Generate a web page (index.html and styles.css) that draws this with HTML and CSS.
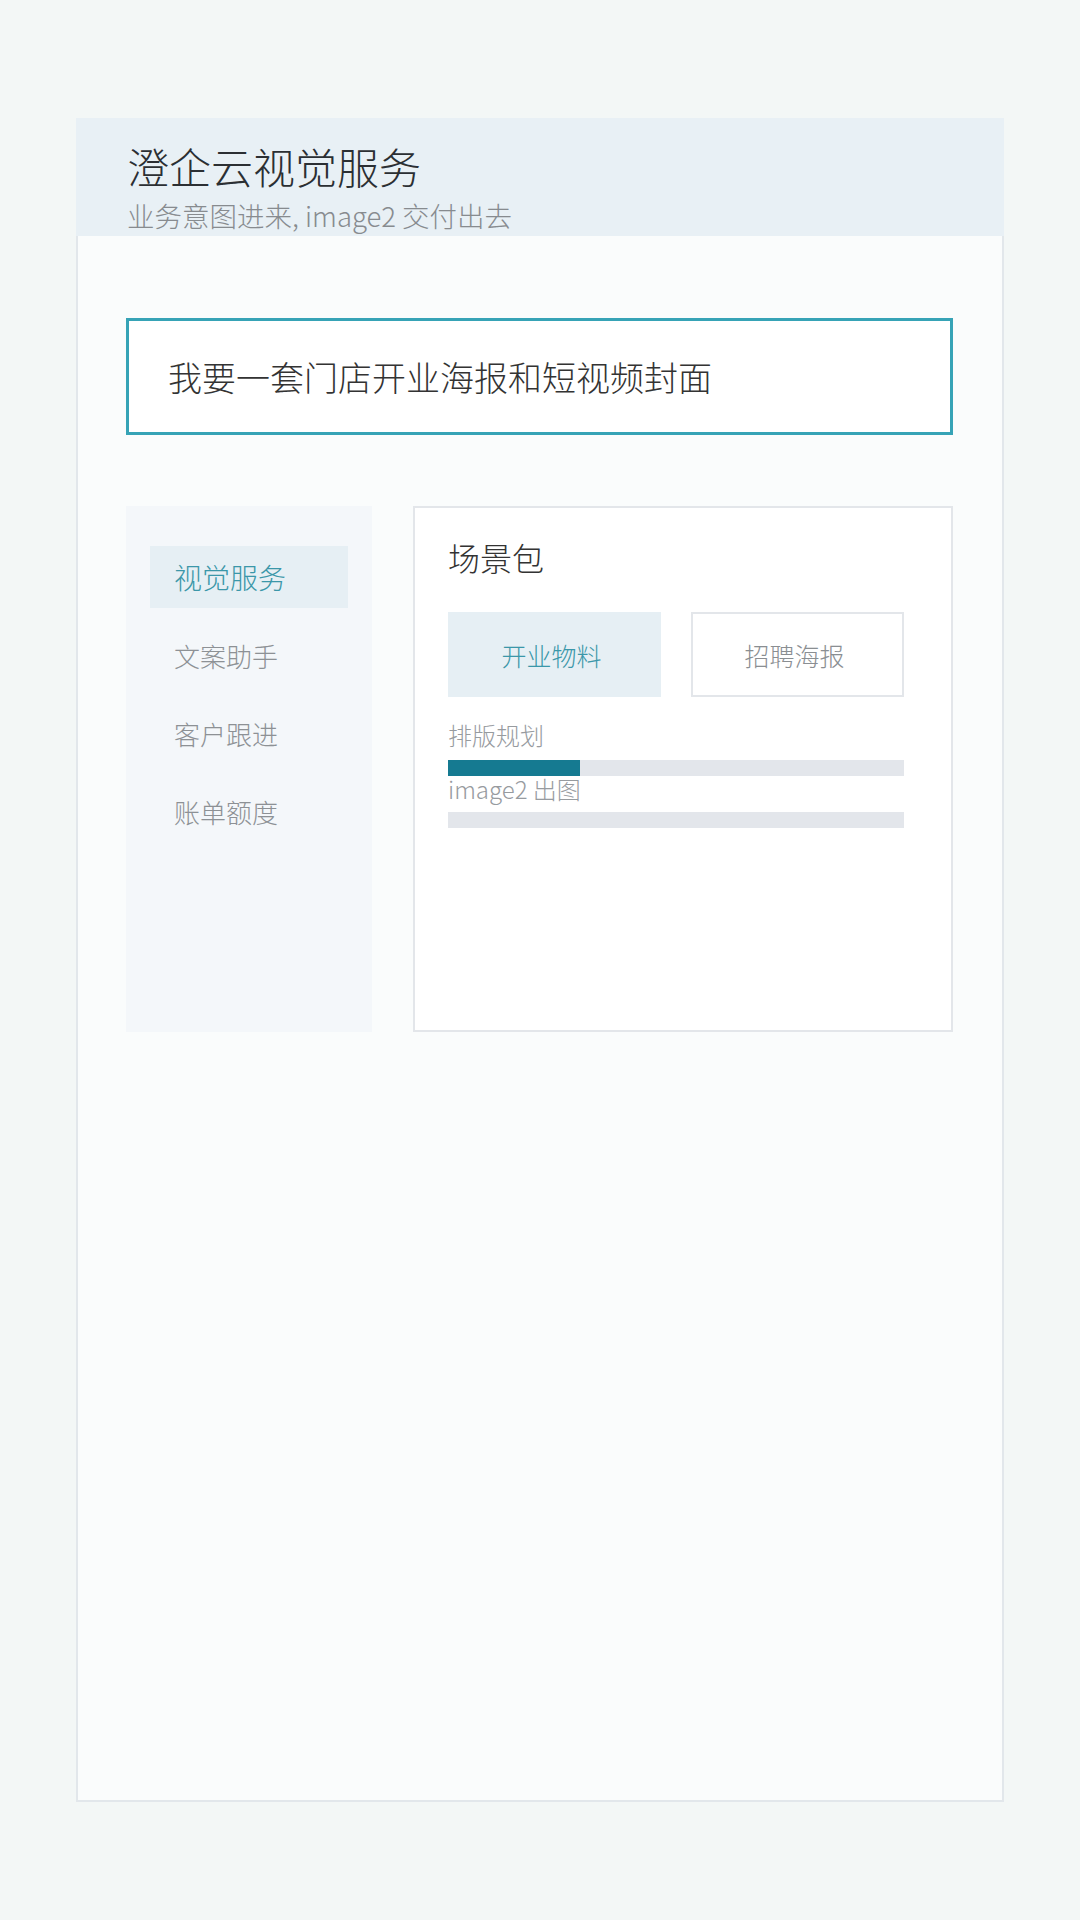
FILE: index.html
```html
<!DOCTYPE html>
<html lang="zh-CN">
<head>
<meta charset="utf-8">
<title>澄企云视觉服务</title>
<link rel="stylesheet" href="styles.css">
</head>
<body>
<div class="page">
  <div class="card">
    <header class="card-header">
      <h1 class="title">澄企云视觉服务</h1>
      <p class="subtitle">业务意图进来, image2 交付出去</p>
    </header>
    <main class="card-body">
      <div class="prompt">我要一套门店开业海报和短视频封面</div>
      <div class="workspace">
        <nav class="sidebar">
          <div class="nav-item active">视觉服务</div>
          <div class="nav-item">文案助手</div>
          <div class="nav-item">客户跟进</div>
          <div class="nav-item">账单额度</div>
        </nav>
        <section class="panel">
          <h2 class="panel-title">场景包</h2>
          <div class="packs">
            <div class="pack selected">开业物料</div>
            <div class="pack">招聘海报</div>
          </div>
          <div class="step-label first">排版规划</div>
          <div class="bar"><div class="bar-fill" style="width: 29%"></div></div>
          <div class="step-label second">image2 出图</div>
          <div class="bar"><div class="bar-fill" style="width: 0%"></div></div>
        </section>
      </div>
    </main>
  </div>
</div>
</body>
</html>
```

FILE: styles.css
```css
* {
  box-sizing: border-box;
}

html, body {
  margin: 0;
  padding: 0;
}

body {
  width: 1080px;
  height: 1920px;
  background: #f3f7f6;
  font-family: "Noto Sans CJK SC", "Noto Sans", sans-serif;
  font-weight: 300;
  color: #333;
}

.page {
  padding: 118px 76px 0 76px;
}

.card {
  width: 928px;
  height: 1684px;
  display: flex;
  flex-direction: column;
}

.card-header {
  height: 118px;
  background: #e8f0f5;
  padding: 24px 0 0 51px;
}

.title {
  margin: 0;
  font-size: 42px;
  line-height: 48px;
  font-weight: 300;
  color: #2b2f33;
}

.subtitle {
  margin: 9px 0 0 0;
  font-size: 27.5px;
  line-height: 32px;
  font-weight: 300;
  color: #878b8f;
}

.card-body {
  flex: 1;
  background: #fafcfc;
  border: 2px solid #e2e7eb;
  border-top: none;
  padding: 82px 49px 0 48px;
}

.prompt {
  height: 117px;
  background: #ffffff;
  border: 3px solid #36a3b6;
  padding-left: 39px;
  display: flex;
  align-items: center;
  font-size: 34px;
  color: #333;
}

.workspace {
  margin-top: 71px;
  height: 526px;
  display: flex;
  gap: 41px;
}

.sidebar {
  width: 246px;
  background: #f4f7fa;
  padding: 40px 24px;
  display: flex;
  flex-direction: column;
  gap: 16px;
}

.nav-item {
  height: 62px;
  padding-left: 24px;
  display: flex;
  align-items: center;
  font-size: 26px;
  color: #8d9195;
}

.nav-item.active {
  background: #e6eff4;
  color: #3b97a9;
  font-size: 28px;
}

.panel {
  flex: 1;
  background: #ffffff;
  border: 2px solid #e3e6ea;
  padding: 29px 47px 0 33px;
}

.panel-title {
  margin: 0;
  font-size: 32px;
  line-height: 40px;
  font-weight: 300;
  color: #333;
}

.packs {
  margin-top: 35px;
  display: flex;
  gap: 30px;
}

.pack {
  width: 213px;
  height: 85px;
  display: flex;
  align-items: center;
  justify-content: center;
  padding-right: 6px;
  font-size: 25px;
  color: #8a8e92;
  border: 2px solid #e3e6ea;
  background: #fff;
}

.pack.selected {
  background: #e6eff4;
  border-color: #e6eff4;
  color: #3b97a9;
}

.step-label {
  font-size: 24px;
  line-height: 26px;
  color: #979b9f;
}

.step-label.first {
  margin-top: 25px;
  margin-bottom: 12px;
}

.step-label.second {
  margin-bottom: 10px;
}

.bar {
  height: 16px;
  background: #e3e6eb;
}

.bar-fill {
  height: 100%;
  background: #157a91;
}
```
